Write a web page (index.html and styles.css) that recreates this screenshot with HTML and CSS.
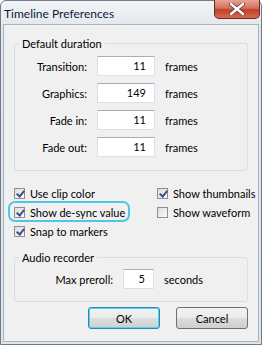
FILE: index.html
```html
<!DOCTYPE html>
<html lang="en">
<head>
    <meta charset="UTF-8">
    <title>Timeline Preferences</title>
    <link rel="stylesheet" href="styles.css">
</head>
<body>
    <div class="window">
        <!-- title bar -->
        <div class="titlebar">
            <span class="title">Timeline Preferences</span>
            <div class="close">
                <svg width="16" height="12" viewBox="0 0 16 12">
                    <path d="M2 1 L14 11 M14 1 L2 11" stroke="#5a3a38" stroke-width="4" stroke-linecap="round"/>
                    <path d="M2 1 L14 11 M14 1 L2 11" stroke="#fff" stroke-width="2.4" stroke-linecap="round"/>
                </svg>
            </div>
        </div>

        <div class="client">
            <!-- default duration -->
            <fieldset class="group">
                <legend>Default duration</legend>
                <div class="rows">
                    <label>Transition:</label><div class="field">11</div><span>frames</span>
                    <label>Graphics:</label><div class="field">149</div><span>frames</span>
                    <label>Fade in:</label><div class="field">11</div><span>frames</span>
                    <label>Fade out:</label><div class="field">11</div><span>frames</span>
                </div>
            </fieldset>

            <!-- options -->
            <div class="options">
                <div class="check"><span class="box on"></span>Use clip color</div>
                <div class="check"><span class="box on"></span>Show thumbnails</div>
                <div class="check hilite"><span class="box on"></span>Show de-sync value</div>
                <div class="check"><span class="box"></span>Show waveform</div>
                <div class="check"><span class="box on"></span>Snap to markers</div>
            </div>

            <!-- audio recorder -->
            <fieldset class="group audio">
                <legend>Audio recorder</legend>
                <div class="preroll">
                    <label>Max preroll:</label><div class="field small">5</div><span>seconds</span>
                </div>
            </fieldset>

            <div class="buttons">
                <button class="default">OK</button>
                <button>Cancel</button>
            </div>
        </div>
    </div>
</body>
</html>
```

FILE: styles.css
```css
body {
    margin: 0;
    background: #ffffff;
    font-family: Lato, "Noto Sans", sans-serif;
    font-size: 11px;
    color: #000000;
}

.window {
    width: 262px;
    height: 345px;
    box-sizing: border-box;
    border: 1px solid #6f7a86;
    border-radius: 6px 6px 0 0;
    background: linear-gradient(#f2f4f6, #e4e8ec 24px, #dfe4e9);
    display: flex;
    flex-direction: column;
}

.titlebar {
    height: 23px;
    display: flex;
    align-items: flex-start;
    justify-content: space-between;
}

.title {
    font-size: 12px;
    color: #10183a;
    padding: 5px 0 0 3px;
}

.close {
    width: 46px;
    height: 19px;
    margin-right: 1px;
    margin-top: -1px;
    box-sizing: border-box;
    border: 1px solid #6b2a22;
    border-top: none;
    border-radius: 0 0 5px 5px;
    background: linear-gradient(#e8a394, #d4705c 45%, #c0402a 55%, #d86a50);
    display: flex;
    align-items: center;
    justify-content: center;
}

.client {
    flex: 1;
    margin: 0 2px 2px 2px;
    background: #f0f0f0;
    border: 1px solid #a9b3bd;
    padding: 0 10px;
    display: flex;
    flex-direction: column;
}

.group {
    margin: 12px 0 0 0;
    padding: 0;
    border: 1px solid #d5dfe5;
    border-radius: 3px;
    min-width: 0;
}

.group legend {
    margin-left: 4px;
    padding: 0 3px;
    color: #000000;
}

.rows {
    display: grid;
    grid-template-columns: 72px 58px auto;
    column-gap: 10px;
    row-gap: 7px;
    align-items: center;
    padding: 6px 0 13px 0;
}

.rows label,
.preroll label {
    text-align: right;
}

.field {
    height: 20px;
    box-sizing: border-box;
    border: 1px solid #dbdfe6;
    border-top-color: #abadb3;
    background: #ffffff;
    text-align: right;
    padding-right: 8px;
    line-height: 18px;
}

.field.small {
    width: 31px;
}

.options {
    display: grid;
    grid-template-columns: 143px 1fr;
    row-gap: 3px;
    margin-top: 14px;
    white-space: nowrap;
}

.check {
    display: flex;
    align-items: center;
    height: 16px;
    position: relative;
}

.hilite::before {
    content: "";
    position: absolute;
    left: -6px;
    top: -3px;
    width: 122px;
    height: 21px;
    border: 2px solid #4ec6e6;
    border-radius: 7px;
    box-sizing: border-box;
}

.box {
    width: 11px;
    height: 11px;
    box-sizing: border-box;
    border: 1px solid #8e8f8f;
    background: linear-gradient(135deg, #dcdcdc, #fbfbfb);
    margin: 0 5px 0 0;
    position: relative;
}

.box.on::after {
    content: "";
    position: absolute;
    left: 3px;
    top: 0px;
    width: 3px;
    height: 6px;
    border: solid #3b4f8e;
    border-width: 0 2px 2px 0;
    transform: rotate(40deg);
}

.audio {
    margin-top: 12px;
}

.preroll {
    display: grid;
    grid-template-columns: 98px 31px auto;
    column-gap: 10px;
    align-items: center;
    padding: 5px 0 12px 0;
}

.buttons {
    display: flex;
    justify-content: flex-end;
    gap: 16px;
    margin-top: 5px;
}

.buttons button {
    width: 72px;
    height: 22px;
    font-family: Lato, "Noto Sans", sans-serif;
    font-size: 11px;
    color: #000000;
    border: 1px solid #707070;
    border-radius: 3px;
    background: linear-gradient(#f2f2f2, #ebebeb 50%, #dddddd 50%, #cfcfcf);
    padding: 0;
}

.buttons button.default {
    border-color: #3c7fb1;
    box-shadow: inset 0 0 0 1px #48d7fb;
}
```
